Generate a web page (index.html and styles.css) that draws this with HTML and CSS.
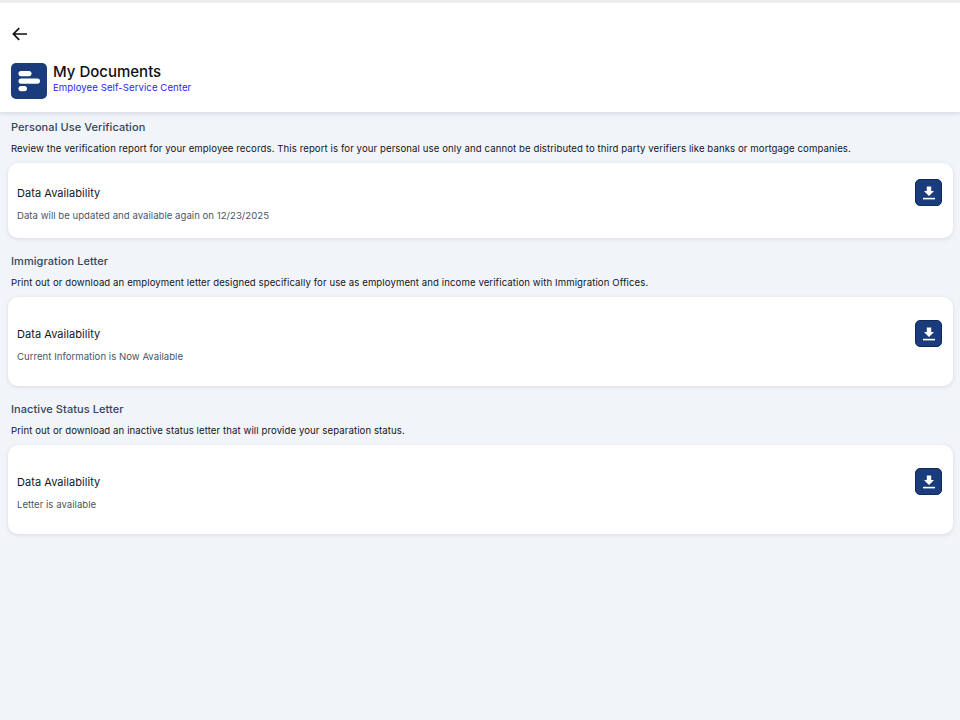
FILE: index.html
```html
<!DOCTYPE html>
<html lang="en">
<head>
<meta charset="utf-8">
<title>My Documents</title>
<link rel="stylesheet" href="styles.css">
</head>
<body>
<header class="header">
  <button class="back" aria-label="Back">
    <svg width="16" height="14" viewBox="0 0 16 14" fill="none" stroke="#111" stroke-width="1.7"><path d="M15 7H1.5M7.2 1.2 1.4 7l5.8 5.8"/></svg>
  </button>
  <div class="brand">
    <div class="logo">
      <svg width="36" height="36" viewBox="0 0 36 36" fill="#fff"><rect x="7.5" y="8" width="13" height="5.2" rx="2.6"/><rect x="7.5" y="15.5" width="21.5" height="5.2" rx="2.6"/><rect x="7.5" y="23" width="8.5" height="5.2" rx="2.6"/></svg>
    </div>
    <div class="brand-text">
      <h1 class="title">My Documents</h1>
      <p class="subtitle">Employee Self-Service Center</p>
    </div>
  </div>
</header>
<main class="content">
  <section class="section">
    <h2 class="section-title">Personal Use Verification</h2>
    <p class="section-desc">Review the verification report for your employee records. This report is for your personal use only and cannot be distributed to third party verifiers like banks or mortgage companies.</p>
    <div class="card card-short">
      <div class="card-text">
        <h3 class="card-title">Data Availability</h3>
        <p class="card-note">Data will be updated and available again on 12/23/2025</p>
      </div>
      <button class="download" aria-label="Download"><svg width="12" height="14" viewBox="0 0 12 14" fill="#fff"><path d="M3.8.5h4.4v4.4H11L6 10 1 4.9h2.8z"/><rect y="11.8" width="12" height="1.6"/></svg></button>
    </div>
  </section>
  <section class="section">
    <h2 class="section-title">Immigration Letter</h2>
    <p class="section-desc">Print out or download an employment letter designed specifically for use as employment and income verification with Immigration Offices.</p>
    <div class="card">
      <div class="card-text">
        <h3 class="card-title">Data Availability</h3>
        <p class="card-note">Current Information is Now Available</p>
      </div>
      <button class="download" aria-label="Download"><svg width="12" height="14" viewBox="0 0 12 14" fill="#fff"><path d="M3.8.5h4.4v4.4H11L6 10 1 4.9h2.8z"/><rect y="11.8" width="12" height="1.6"/></svg></button>
    </div>
  </section>
  <section class="section">
    <h2 class="section-title">Inactive Status Letter</h2>
    <p class="section-desc">Print out or download an inactive status letter that will provide your separation status.</p>
    <div class="card">
      <div class="card-text">
        <h3 class="card-title">Data Availability</h3>
        <p class="card-note">Letter is available</p>
      </div>
      <button class="download" aria-label="Download"><svg width="12" height="14" viewBox="0 0 12 14" fill="#fff"><path d="M3.8.5h4.4v4.4H11L6 10 1 4.9h2.8z"/><rect y="11.8" width="12" height="1.6"/></svg></button>
    </div>
  </section>
</main>
</body>
</html>
```
FILE: styles.css
```css
* { box-sizing: border-box; }
html, body { margin: 0; padding: 0; height: 100%; }
body {
  background: #f1f4f8;
  font-family: "Inter", "Liberation Sans", sans-serif;
  overflow: hidden;
}
h1, h2, h3, p { margin: 0; font-weight: 400; }
.header {
  background: #fff;
  height: 112px;
  padding: 0 11px;
  border-top: 3px solid #ececec;
  box-shadow: 0 1px 5px rgba(30, 50, 80, 0.16);
  display: flex;
  flex-direction: column;
}
.back {
  border: 0;
  background: none;
  padding: 0;
  margin: 24px 0 0 1px;
  height: 14px;
  width: 16px;
  display: flex;
}
.brand { display: flex; align-items: flex-start; gap: 6px; margin-top: 22px; }
.logo {
  width: 36px;
  height: 36px;
  border-radius: 5px;
  background: #1a3c7c;
  display: flex;
}
.title { font-size: 15px; line-height: 18px; color: #0e1116; font-weight: 500; }
.subtitle { font-size: 9.6px; line-height: 13px; color: #2b1ff0; letter-spacing: 0.07px; }
.content { padding: 0 7px 0 8px; }
.section { display: flex; flex-direction: column; }
.section-title {
  font-size: 11px;
  font-weight: 500;
  line-height: 14px;
  color: #34465a;
  margin: 8px 0 0 3px;
  letter-spacing: 0.07px;
}
.section-desc {
  font-size: 9.6px;
  line-height: 14px;
  color: #12161c;
  margin: 8px 0 7px 3px;
  letter-spacing: 0.09px;
  white-space: nowrap;
}
.section + .section { margin-top: 8px; }
.card {
  background: #fff;
  border-radius: 10px;
  height: 89px;
  padding: 23px 11px 0 9px;
  display: flex;
  justify-content: space-between;
  align-items: flex-start;
  box-shadow: 0 1px 4px rgba(30, 50, 80, 0.12);
}
.card-short { height: 75px; padding-top: 16px; }
.card-title { font-size: 11px; line-height: 14px; color: #12161c; margin-top: 7px; letter-spacing: 0.05px; }
.card-note { font-size: 9.6px; line-height: 14px; color: #4a5666; margin-top: 9px; letter-spacing: 0.02px; }
.download {
  width: 27px;
  height: 27px;
  border-radius: 5px;
  background: #1a3c7c;
  border: 1px solid #12295a;
  padding: 0;
  display: flex;
  align-items: center;
  justify-content: center;
}
```
